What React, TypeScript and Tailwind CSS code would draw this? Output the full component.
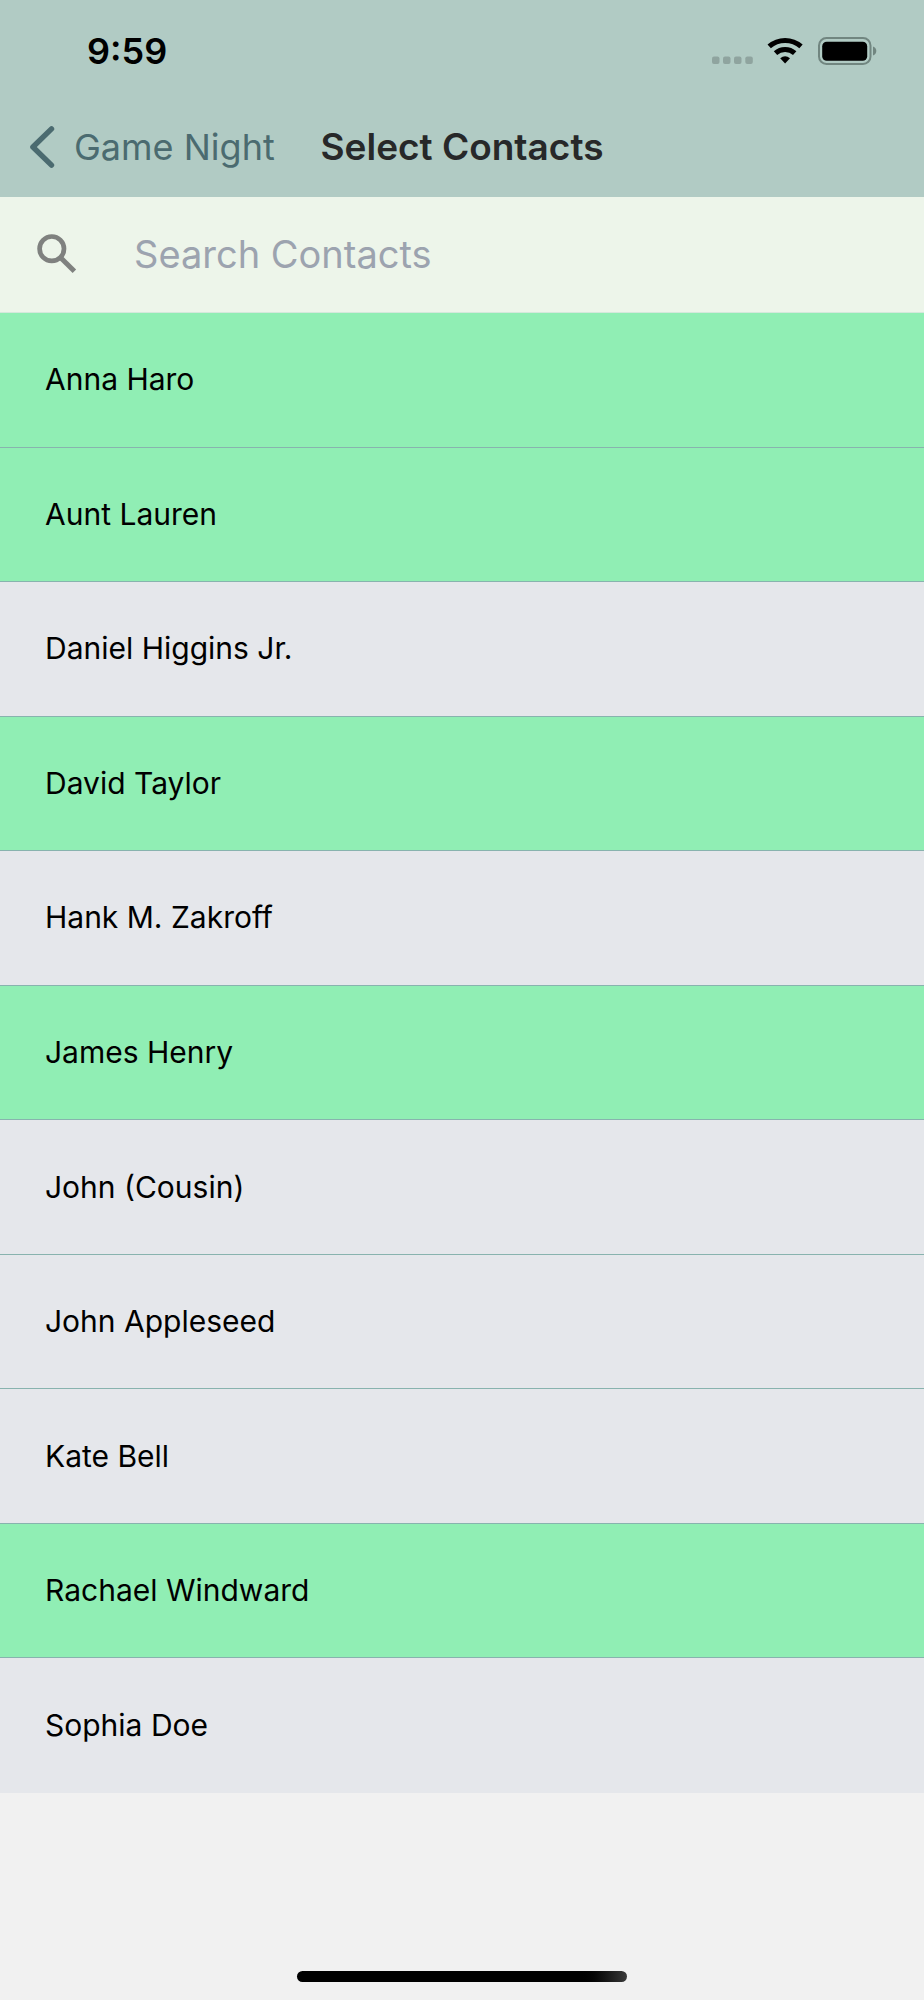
import { useState } from 'react';

interface Contact {
  id: number;
  name: string;
}

const CONTACTS: Contact[] = [
  { id: 1, name: 'Anna Haro' },
  { id: 2, name: 'Aunt Lauren' },
  { id: 3, name: 'Daniel Higgins Jr.' },
  { id: 4, name: 'David Taylor' },
  { id: 5, name: 'Hank M. Zakroff' },
  { id: 6, name: 'James Henry' },
  { id: 7, name: 'John (Cousin)' },
  { id: 8, name: 'John Appleseed' },
  { id: 9, name: 'Kate Bell' },
  { id: 10, name: 'Rachael Windward' },
  { id: 11, name: 'Sophia Doe' },
];

function StatusIcons() {
  return (
    <svg width="166" height="28" viewBox="0 0 166 28" aria-hidden="true">
      {/* no signal */}
      <g fill="#8fa49f">
        <rect x="1" y="19.5" width="7.5" height="7.5" rx="2" />
        <rect x="12" y="19.5" width="7.5" height="7.5" rx="2" />
        <rect x="23" y="19.5" width="7.5" height="7.5" rx="2" />
        <rect x="34.3" y="19.5" width="7.5" height="7.5" rx="2" />
      </g>
      {/* wifi */}
      <g fill="none" stroke="#000" strokeWidth="5">
        <path d="M58.2 9.4A24 24 0 0 1 90 9.4" />
        <path d="M64.5 16.2A14.2 14.2 0 0 1 83.7 16.2" />
      </g>
      <path d="M69.2 21.2Q74.1 17.4 79 21.2L74.1 26.6Z" fill="#000" />
      {/* battery */}
      <rect x="108" y="1" width="51.5" height="26" rx="7.5" fill="none" stroke="#718680" strokeWidth="2" />
      <rect x="111.2" y="4.7" width="45" height="19" rx="4.5" fill="#000" />
      <path d="M162 9.6Q165.3 10.8 165.3 14T162 18.6Z" fill="#718680" />
    </svg>
  );
}

function SearchIcon() {
  return (
    <svg width="54" height="54" viewBox="0 0 54 54" fill="none" stroke="#7f817f" aria-hidden="true">
      <circle cx="21.8" cy="20.7" r="12.2" strokeWidth="4.7" />
      <path d="M31.2 30.2L44.4 43.2" strokeWidth="5" />
    </svg>
  );
}

function Header() {
  return (
    <header className="bg-[#b1cbc4] pb-1">
      <div className="flex h-[101px] items-center justify-between pr-[47px] pl-[87px]">
        <span className="text-[36px] leading-none font-semibold text-black">9:59</span>
        <StatusIcons />
      </div>
      <div className="grid h-[92px] grid-cols-[1fr_auto_1fr] items-center">
        <button type="button" className="flex items-center gap-[19px] pl-[30px] text-[36px] whitespace-nowrap text-[#4b6b70]">
          <svg width="25" height="42" viewBox="0 0 25 42" fill="none" stroke="currentColor" strokeWidth="5.4" strokeLinecap="round" strokeLinejoin="round" aria-hidden="true">
            <path d="M21.5 2.9L2.9 21L21.5 39.1" />
          </svg>
          Game Night
        </button>
        <h1 className="text-[37px] font-semibold text-[#272829]">Select Contacts</h1>
      </div>
    </header>
  );
}

export default function App() {
  const [query, setQuery] = useState('');
  const [selected, setSelected] = useState<number[]>([1, 2, 4, 6, 10]);

  const toggleContact = (id: number) => {
    setSelected(prev =>
      prev.includes(id) ? prev.filter(i => i !== id) : [...prev, id]
    );
  };

  const visible = CONTACTS.filter(c => c.name.toLowerCase().includes(query.toLowerCase()));

  return (
    <div className="flex min-h-screen flex-col bg-[#f1f1f1] font-['Inter',sans-serif]">
      <Header />

      <label className="flex h-[116px] items-center gap-[50px] border-b border-[#d5e8dc] bg-[#edf5ea] pr-8 pl-[30px]">
        <SearchIcon />
        <input
          type="text"
          value={query}
          onChange={(e) => setQuery(e.target.value)}
          placeholder="Search Contacts"
          aria-label="Search Contacts"
          className="min-w-0 flex-1 bg-transparent text-[38px] text-black outline-none placeholder:text-[#9ca3af]"
        />
      </label>

      <ul className="grid flex-1 auto-rows-fr divide-y divide-[#88b3ae]">
        {visible.map(contact => (
          <li key={contact.id} className="grid">
            <button
              type="button"
              aria-pressed={selected.includes(contact.id)}
              onClick={() => toggleContact(contact.id)}
              className={`px-[45px] text-left text-[30px] text-black ${
                selected.includes(contact.id) ? 'bg-[#90eeb4]' : 'bg-[#e5e7eb]'
              }`}
            >
              {contact.name}
            </button>
          </li>
        ))}
      </ul>

      <footer className="flex h-[207px] items-end justify-center pb-[18px]">
        <div className="h-[11px] w-[330px] rounded-full bg-linear-to-r from-black from-85% to-[#3a3a3a]" />
      </footer>
    </div>
  );
}
